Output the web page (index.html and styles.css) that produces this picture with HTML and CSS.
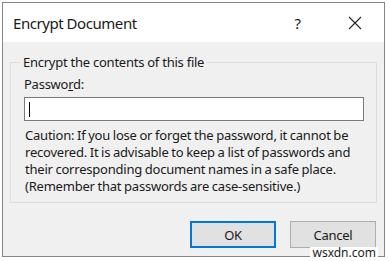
FILE: index.html
```html
<!DOCTYPE html>
<html lang="en">
<head>
    <meta charset="UTF-8">
    <title>Encrypt Document</title>
    <link rel="stylesheet" href="styles.css">
</head>
<body>

<div class="dialog">
    <div class="titlebar">
        <span class="title">Encrypt Document</span>
        <span class="help">?</span>
        <svg class="close" width="14" height="14" viewBox="0 0 14 14">
            <path d="M1 1 L13 13 M13 1 L1 13" stroke="#222" stroke-width="1.1" fill="none"/>
        </svg>
    </div>
    <div class="content">
        <fieldset class="group">
            <legend>Encrypt the contents of this file</legend>
            <label for="pwd">Passwo<u>r</u>d:</label>
            <div class="input"><span class="caret"></span></div>
            <p class="caution">Caution: If you lose or forget the password, it cannot be recovered. It is advisable to keep a list of passwords and their corresponding document names in a safe place. (Remember that passwords are case-sensitive.)</p>
        </fieldset>
        <div class="buttons">
            <button class="btn default">OK</button>
            <button class="btn">Cancel</button>
        </div>
    </div>
    <span class="watermark">wsxdn.com</span>
</div>

</body>
</html>
```

FILE: styles.css
```css
body {
    margin: 0;
    background: #fff;
    font-family: "Noto Sans", "Open Sans", sans-serif;
    color: #1a1a1a;
}
.dialog {
    position: relative;
    margin: 2px;
    width: 383px;
    height: 255px;
    border: 1px solid #868686;
    display: flex;
    flex-direction: column;
    box-sizing: border-box;
}
.titlebar {
    height: 39px;
    background: #fff;
    display: flex;
    align-items: center;
    padding: 0 0 0 10px;
}
.title {
    font-size: 15px;
    letter-spacing: -0.45px;
    flex: 1;
}
.help {
    font-size: 15px;
    margin-right: 47px;
}
.close {
    margin-right: 22px;
}
.content {
    flex: 1;
    background: #f0f0f0;
    padding: 11px 7px 0 7px;
    letter-spacing: -0.25px;
}
.group {
    margin: 0;
    border: 1px solid #dcdcdc;
    padding: 4px 12px 7px 13px;
}
.group legend {
    font-size: 13px;
    padding: 0 3px;
    margin-left: -4px;
}
label {
    display: block;
    font-size: 13px;
    margin-bottom: 4px;
}
.input {
    height: 22px;
    background: #fff;
    border: 1px solid #7a7a7a;
    display: flex;
    align-items: center;
    padding-left: 4px;
}
.caret {
    width: 1px;
    height: 15px;
    background: #000;
}
.caution {
    margin: 6px 0 0 1px;
    font-size: 13px;
    letter-spacing: -0.22px;
    word-spacing: -0.4px;
    line-height: 17px;
}
.buttons {
    display: flex;
    justify-content: flex-end;
    gap: 14px;
    margin-top: 18px;
    padding-right: 1px;
}
.btn {
    width: 86px;
    height: 27px;
    font-family: inherit;
    font-size: 13px;
    letter-spacing: inherit;
    background: #e1e1e1;
    border: 1px solid #adadad;
    color: #1a1a1a;
    padding: 0;
}
.btn.default {
    border: 2px solid #0078d7;
}
.watermark {
    position: absolute;
    right: 6px;
    bottom: -2px;
    font-size: 12px;
    color: #222;
    background: #fff;
    padding: 0 2px;
    line-height: 11px;
}
```
